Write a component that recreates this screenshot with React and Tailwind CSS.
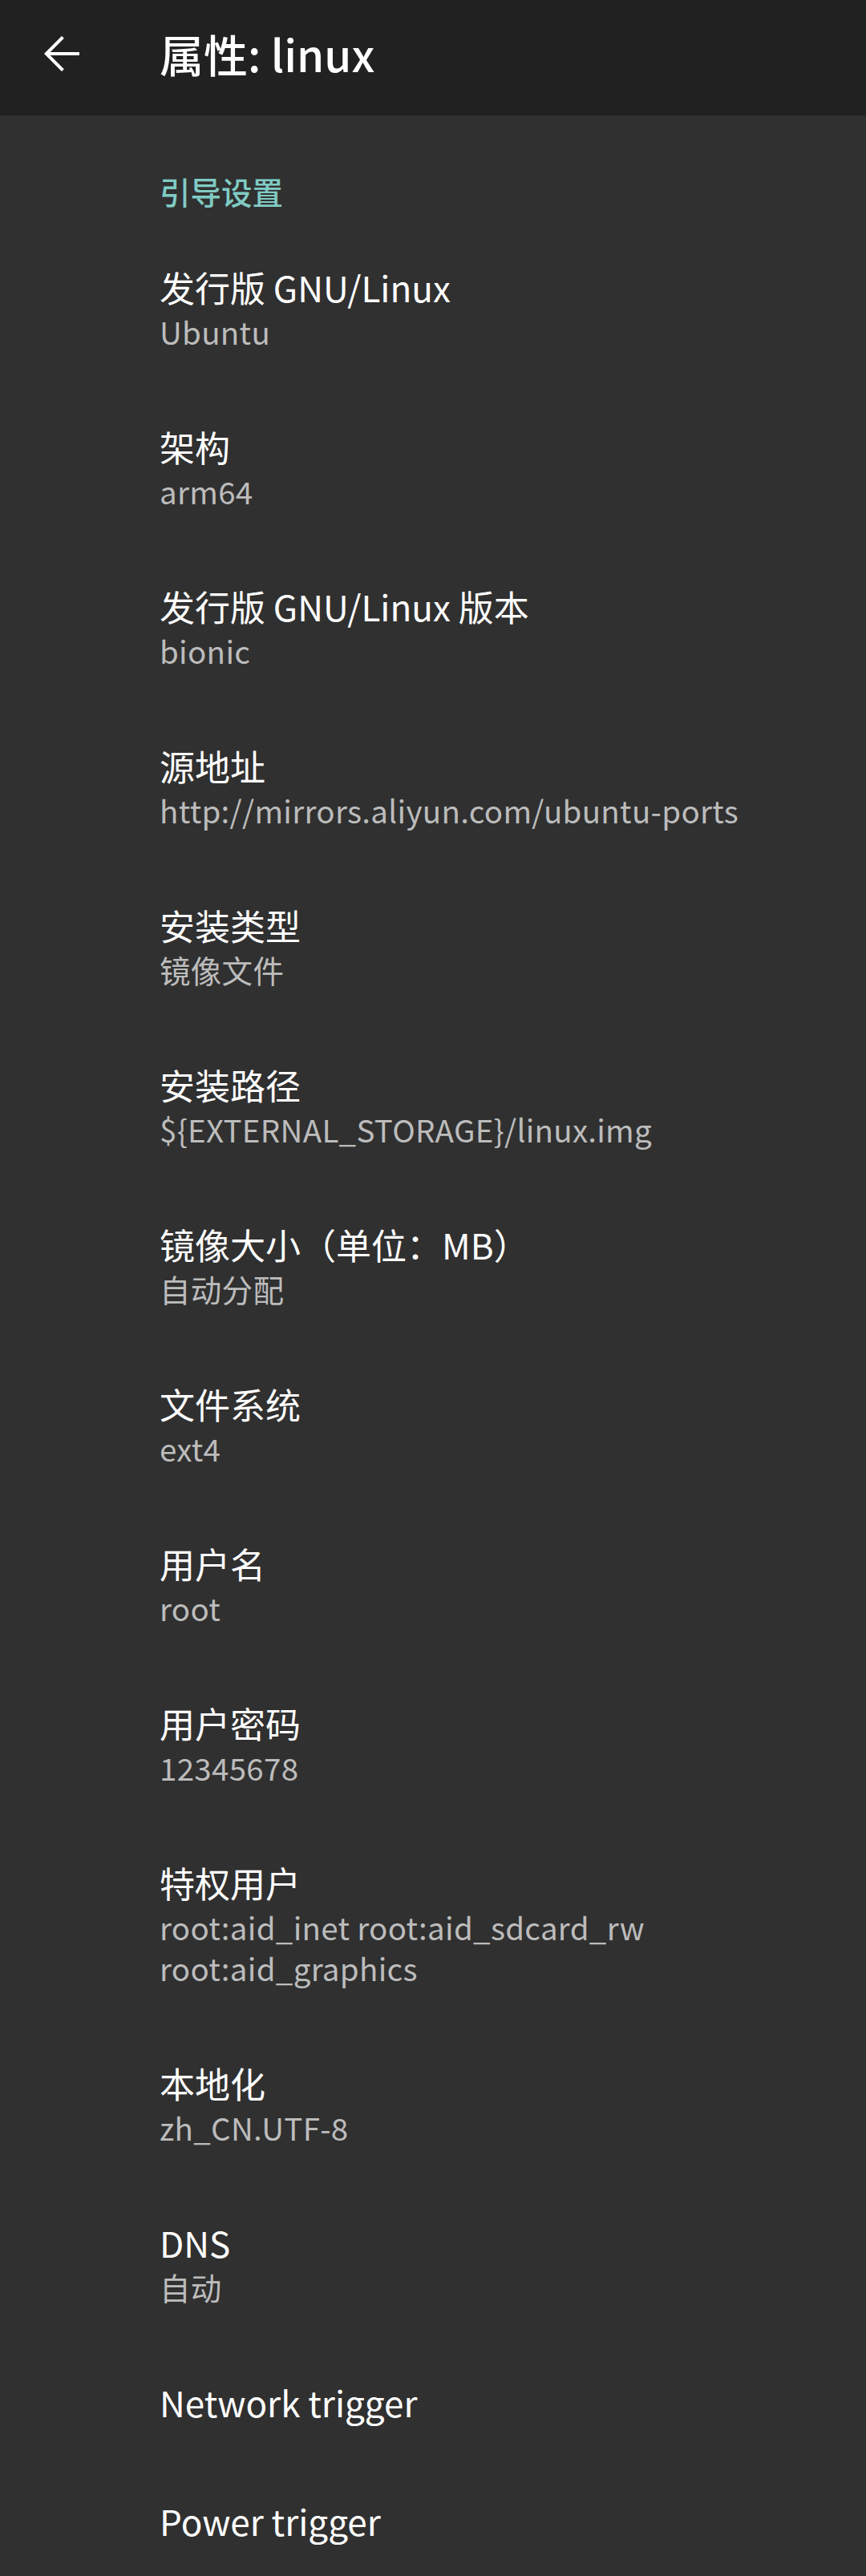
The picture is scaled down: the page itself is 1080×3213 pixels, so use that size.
import React from "react";

const items = [
  { title: "发行版 GNU/Linux", summary: ["Ubuntu"] },
  { title: "架构", summary: ["arm64"] },
  { title: "发行版 GNU/Linux 版本", summary: ["bionic"] },
  { title: "源地址", summary: ["http://mirrors.aliyun.com/ubuntu-ports"] },
  { title: "安装类型", summary: ["镜像文件"] },
  { title: "安装路径", summary: ["${EXTERNAL_STORAGE}/linux.img"] },
  { title: "镜像大小（单位：MB）", summary: ["自动分配"] },
  { title: "文件系统", summary: ["ext4"] },
  { title: "用户名", summary: ["root"] },
  { title: "用户密码", summary: ["12345678"] },
  { title: "特权用户", summary: ["root:aid_inet root:aid_sdcard_rw", "root:aid_graphics"] },
  { title: "本地化", summary: ["zh_CN.UTF-8"] },
  { title: "DNS", summary: ["自动"] },
  { title: "Network trigger", summary: [] },
  { title: "Power trigger", summary: [] },
];

const font = { fontFamily: '"Noto Sans CJK SC", "Noto Sans", sans-serif' };

const PrefItem = ({ title, summary }) => (
  <div className="py-[44px] pl-[199px] pr-[44px]">
    <div className="text-[44px] leading-[60px] text-white">{title}</div>
    {summary.map((line, i) => (
      <div key={i} className="text-[38.5px] leading-[51px] tracking-[0.3px] text-[#bcbcbc]">
        {line}
      </div>
    ))}
  </div>
);

export default function App() {
  return (
    <div className="min-h-screen h-[3213px] overflow-hidden bg-[#303030]" style={font}>
      <div className="h-[144px] bg-[#212121] flex items-center pb-[11px]">
        <div className="w-[199px] pl-[55px] flex items-center">
          <svg width="44" height="44" viewBox="0 0 16 16" fill="none" stroke="white" strokeWidth="1.45" strokeLinecap="square">
            <path d="M15.5 8H1.5" />
            <path d="M8 1L1 8l7 7" />
          </svg>
        </div>
        <h1 className="text-[55px] font-medium text-white leading-none">属性: linux</h1>
      </div>
      <div className="pt-[69px] pb-[21px] pl-[199px] text-[38.5px] leading-[50px] font-medium text-[#80cbc4]">
        引导设置
      </div>
      <div>
        {items.map((it, i) => (
          <PrefItem key={i} title={it.title} summary={it.summary} />
        ))}
      </div>
    </div>
  );
}
